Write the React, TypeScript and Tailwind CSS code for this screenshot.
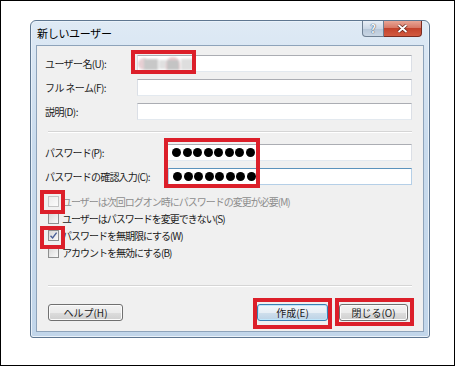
import React from "react";

const font = "font-['Noto_Sans_CJK_JP','Noto_Sans',sans-serif]";

function TextBox({ focused, children, className = "" }: { focused?: boolean; children?: React.ReactNode; className?: string }) {
  return (
    <div
      className={
        "h-[17px] flex-1 bg-white flex items-center border " +
        (focused
          ? "border-[#b5cfe7] border-t-[#5c93bc]"
          : "border-[#dbdfe6] border-t-[#abadb3] border-b-[#e3e9ef]") +
        " " +
        className
      }
    >
      {children}
    </div>
  );
}

function Dots() {
  return (
    <div className="flex gap-[1.5px] pl-[4px]">
      {Array.from({ length: 8 }).map((_, i) => (
        <span key={i} className="block w-[9px] h-[9px] rounded-full bg-black" />
      ))}
    </div>
  );
}

function Check({ checked, disabled }: { checked?: boolean; disabled?: boolean }) {
  return (
    <div
      className={
        "w-[11px] h-[11px] border flex items-center justify-center shrink-0 " +
        (disabled
          ? "border-[#c4c4c4] bg-gradient-to-br from-[#ececec] to-[#fbfbfb]"
          : "border-[#8e8f8f] bg-gradient-to-br from-[#d8d8d8] to-[#fafafa]")
      }
    >
      {checked && (
        <svg width="9" height="9" viewBox="0 0 9 9">
          <path d="M1.5 4.8 L3.6 7 L7.6 1.6" stroke="#4a5f97" strokeWidth="1.4" fill="none" />
        </svg>
      )}
    </div>
  );
}

function CheckRow({ label, checked, disabled }: { label: string; checked?: boolean; disabled?: boolean }) {
  return (
    <div className="h-[17px] flex items-center gap-[3px] pl-[11px]">
      <Check checked={checked} disabled={disabled} />
      <span
        className={
          "text-[10px] leading-none tracking-[-1px] whitespace-nowrap " +
          (disabled ? "text-[#8d8d8d]" : "text-[#1b1b1b]")
        }
      >
        {label}
      </span>
    </div>
  );
}

function Btn({ label, def, className = "" }: { label: string; def?: boolean; className?: string }) {
  return (
    <div
      className={
        "h-[17px] rounded-[3px] border flex items-center justify-center text-[10px] leading-none text-[#1b1b1b] " +
        (def
          ? "border-[#3c7fb1] bg-[linear-gradient(#f0f6fb_0%,#e6eef5_50%,#cfdfec_51%,#bcd3e6_100%)] shadow-[inset_0_0_0_1px_#bfe6fb]"
          : "border-[#707070] bg-[linear-gradient(#f2f2f2_0%,#ebebeb_50%,#dddddd_51%,#cfcfcf_100%)] shadow-[inset_0_0_0_1px_#fbfbfb]") +
        " " +
        className
      }
    >
      {label}
    </div>
  );
}

function RedBox({ className }: { className: string }) {
  return <div className={"absolute border-[4px] border-[#dc1f2a] " + className} />;
}

export default function App() {
  return (
    <div className={"relative w-[455px] h-[366px] border border-black bg-white overflow-hidden " + font}>
      {/* dialog */}
      <div className="ml-[29px] mt-[19px] w-[400px] h-[318px] rounded-t-[6px] rounded-b-[3px] border border-[#5f7791] bg-[linear-gradient(#dfeaf5,#c9dbed_40%,#c2d6ea)] flex flex-col shadow-[inset_0_0_0_1px_#eaf2fa]">
        {/* title bar */}
        <div className="h-[24px] flex items-start shrink-0">
          <div className="pl-[6px] pt-[7px] text-[11px] leading-none text-black tracking-[-0.3px]">新しいユーザー</div>
          <div className="ml-auto mr-[7px] flex">
            <div className="w-[22px] h-[16px] rounded-bl-[4px] border border-t-0 border-[#6e7f92] bg-[linear-gradient(#e9eff6,#ccd8e6_50%,#b6c6d8_51%,#c9d6e4)] flex items-center justify-center">
              <span className="text-[11px] font-bold leading-none text-[#f4f7fb] [text-shadow:0_0_1px_#3b4b5e,0_0_1px_#3b4b5e]">?</span>
            </div>
            <div className="w-[38px] h-[16px] rounded-br-[4px] border border-l-0 border-t-0 border-[#7a2b20] bg-[linear-gradient(#e8a595,#d77866_45%,#c3422b_50%,#d25a40)] flex items-center justify-center">
              <svg width="11" height="9" viewBox="0 0 11 9">
                <path d="M1.5 1 L9.5 8 M9.5 1 L1.5 8" stroke="#5a1b12" strokeWidth="3.2" />
                <path d="M1.5 1 L9.5 8 M9.5 1 L1.5 8" stroke="#ffffff" strokeWidth="1.9" />
              </svg>
            </div>
          </div>
        </div>
        {/* content */}
        <div className="mx-[5px] mb-[5px] flex-1 border border-[#8ea3ba] bg-[#f0f0f0] flex flex-col text-[10px] leading-none text-[#1b1b1b]">
          <div className="pt-[9px] pl-[8px] pr-[11px] flex flex-col gap-[7px]">
            <div className="flex items-center">
              <span className="w-[92px] tracking-[-0.6px] whitespace-nowrap">ユーザー名(U):</span>
              <TextBox>
                <div className="relative w-[56px] h-[15px] blur-[1px]">
                  <div className="absolute left-[0px] top-[2px] w-[8px] h-[12px] rounded-l-full bg-[#e6cfd3]" />
                  <div className="absolute left-[6px] top-[3px] w-[14px] h-[11px] bg-[#c8c8c8]" />
                  <div className="absolute left-[21px] top-[4px] w-[8px] h-[9px] bg-[#e0e0e0]" />
                  <div className="absolute left-[28px] top-[1px] w-[14px] h-[13px] rounded-t-full bg-[#e9c9ce]" />
                  <div className="absolute left-[29px] top-[4px] w-[12px] h-[10px] bg-[#c4c4c4]" />
                  <div className="absolute left-[43px] top-[3px] w-[12px] h-[11px] bg-[#dedede]" />
                </div>
              </TextBox>
            </div>
            <div className="flex items-center">
              <span className="w-[92px] tracking-[-0.6px] whitespace-nowrap">フル ネーム(F):</span>
              <TextBox />
            </div>
            <div className="flex items-center">
              <span className="w-[92px] tracking-[-0.6px] whitespace-nowrap">説明(D):</span>
              <TextBox />
            </div>
          </div>
          <div className="mt-[11px] mx-[11px] h-[2px] border-t border-[#d5d5d5] border-b border-b-white" />
          <div className="mt-[11px] pl-[8px] pr-[11px] flex flex-col gap-[7px]">
            <div className="flex items-center">
              <span className="w-[122px] tracking-[-0.8px] whitespace-nowrap">パスワード(P):</span>
              <TextBox>
                <Dots />
              </TextBox>
            </div>
            <div className="flex items-center">
              <span className="w-[123px] tracking-[-0.8px] whitespace-nowrap">パスワードの確認入力(C):</span>
              <TextBox focused>
                <Dots />
              </TextBox>
            </div>
          </div>
          <div className="mt-[8px] flex flex-col">
            <CheckRow disabled label="ユーザーは次回ログオン時にパスワードの変更が必要(M)" />
            <CheckRow label="ユーザーはパスワードを変更できない(S)" />
            <CheckRow checked label="パスワードを無期限にする(W)" />
            <CheckRow label="アカウントを無効にする(B)" />
          </div>
          <div className="mt-[24px] mx-[11px] h-[2px] border-t border-[#d5d5d5] border-b border-b-white" />
          <div className="mt-[17px] pl-[11px] pr-[15px] flex items-center">
            <Btn label="ヘルプ(H)" className="w-[75px]" />
            <Btn label="作成(E)" def className="w-[71px] ml-auto" />
            <Btn label="閉じる(O)" className="w-[69px] ml-[11px]" />
          </div>
        </div>
      </div>
      {/* red annotation boxes */}
      <RedBox className="left-[130px] top-[49px] w-[65px] h-[24px]" />
      <RedBox className="left-[163px] top-[137px] w-[96px] h-[50px]" />
      <RedBox className="left-[39px] top-[189px] w-[25px] h-[24px]" />
      <RedBox className="left-[39px] top-[225px] w-[25px] h-[23px]" />
      <RedBox className="left-[252px] top-[297px] w-[79px] h-[31px]" />
      <RedBox className="left-[334px] top-[297px] w-[79px] h-[28px]" />
    </div>
  );
}
